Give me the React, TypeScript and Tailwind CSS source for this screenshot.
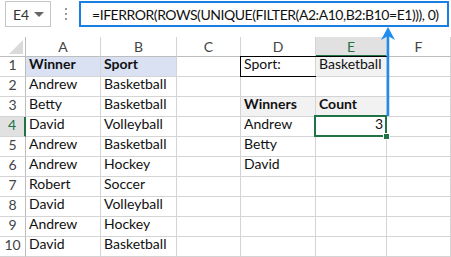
import React from "react";

const cols = ["A", "B", "C", "D", "E", "F"];

const data: string[][] = [
  ["Winner", "Sport", "", "Sport:", "Basketball", ""],
  ["Andrew", "Basketball", "", "", "", ""],
  ["Betty", "Basketball", "", "Winners", "Count", ""],
  ["David", "Volleyball", "", "Andrew", "3", ""],
  ["Andrew", "Basketball", "", "Betty", "", ""],
  ["Andrew", "Hockey", "", "David", "", ""],
  ["Robert", "Soccer", "", "", "", ""],
  ["David", "Volleyball", "", "", "", ""],
  ["Andrew", "Hockey", "", "", "", ""],
  ["David", "Basketball", "", "", "", ""],
];

const font = { fontFamily: "Lato, 'Liberation Sans', sans-serif" };

function cellClass(r: number, c: number) {
  let cls = "relative flex items-end pb-[2px] px-[3px] border-r border-b border-[#d4d4d4] whitespace-nowrap overflow-visible";
  if (r === 0 && c <= 1) cls += " bg-[#d9e1f2] font-bold";
  if (r === 2 && (c === 3 || c === 4)) cls += " bg-[#f2f2f2] font-bold";
  if (r === 0 && c === 4) cls += " bg-[#f2f2f2]";
  if (r === 3 && c === 4) cls += " justify-end z-10";
  return cls;
}

export default function App() {
  return (
    <div className="relative w-[451px] h-[257px] bg-white overflow-hidden text-[14px] text-[#111]" style={font}>
      {/* formula bar */}
      <div className="flex items-start h-[37px] pt-[1px]">
        <div className="ml-[5px] w-[46px] h-[26px] border border-[#c6c6c6] flex items-center pl-[7px] text-[14px] text-[#333]">
          E4
          <span className="ml-auto mr-[6px] w-0 h-0 border-l-[5px] border-r-[5px] border-t-[5px] border-l-transparent border-r-transparent border-t-[#666]" />
        </div>
        <div className="ml-[14px] mt-[7px] flex flex-col gap-[3px]">
          <span className="w-[2px] h-[2px] bg-[#999]" />
          <span className="w-[2px] h-[2px] bg-[#999]" />
          <span className="w-[2px] h-[2px] bg-[#999]" />
        </div>
        <div className="ml-[12px] w-[370px] h-[26px] border-2 border-[#1a7fe0] flex items-center pl-[11px] text-[14px] tracking-[-0.45px] text-[#111] whitespace-nowrap">
          =IFERROR(ROWS(UNIQUE(FILTER(A2:A10,B2:B10=E1))), 0)
        </div>
      </div>

      {/* grid */}
      <div className="grid grid-cols-[26px_75px_76px_64px_75px_71px_1fr] grid-rows-[20px_repeat(10,20px)]">
        <div className="relative border-r border-b border-[#bdbdbd]">
          <svg className="absolute right-[2px] bottom-[2px]" width="14" height="14">
            <polygon points="14,0 14,14 0,14" fill="#dadada" />
          </svg>
        </div>
        {cols.map((c) => (
          <div
            key={c}
            className={
              c === "E"
                ? "flex items-center justify-center bg-[#e1e1e1] border-r border-[#d4d4d4] border-b-2 border-b-[#217346] text-[#217346]"
                : "flex items-center justify-center border-r border-b border-[#d4d4d4] border-b-[#bdbdbd] text-[#444]"
            }
          >
            {c}
          </div>
        ))}

        {data.map((row, r) => (
          <React.Fragment key={r}>
            <div
              className={
                r === 3
                  ? "flex items-end justify-center pb-[1px] bg-[#e1e1e1] border-r-2 border-r-[#217346] border-b border-b-[#d4d4d4] text-[#217346]"
                  : "flex items-end justify-center pb-[1px] border-r border-r-[#bdbdbd] border-b border-b-[#d4d4d4] text-[#444]"
              }
            >
              {r + 1}
            </div>
            {row.map((v, c) => (
              <div key={c} className={cellClass(r, c)}>
                {v}
                {r === 0 && c === 3 && (
                  <span className="absolute left-[-1px] top-[-1px] w-[147px] h-[21px] border border-black pointer-events-none" />
                )}
                {r === 3 && c === 4 && (
                  <>
                    <span className="absolute left-[-2px] top-[-2px] w-[73px] h-[22px] border-2 border-[#217346] pointer-events-none" />
                    <span className="absolute right-[-4px] bottom-[-4px] w-[7px] h-[7px] bg-[#217346] border border-white" />
                  </>
                )}
              </div>
            ))}
          </React.Fragment>
        ))}
      </div>

      {/* arrow from cell E1 up to formula bar */}
      <svg className="absolute left-[380px] top-[26px]" width="16" height="90" viewBox="0 0 16 90">
        <line x1="8" y1="8" x2="8" y2="90" stroke="#1e8cf0" strokeWidth="2.5" />
        <polygon points="8,1 1,14 8,10 15,14" fill="#1e8cf0" />
      </svg>
    </div>
  );
}
